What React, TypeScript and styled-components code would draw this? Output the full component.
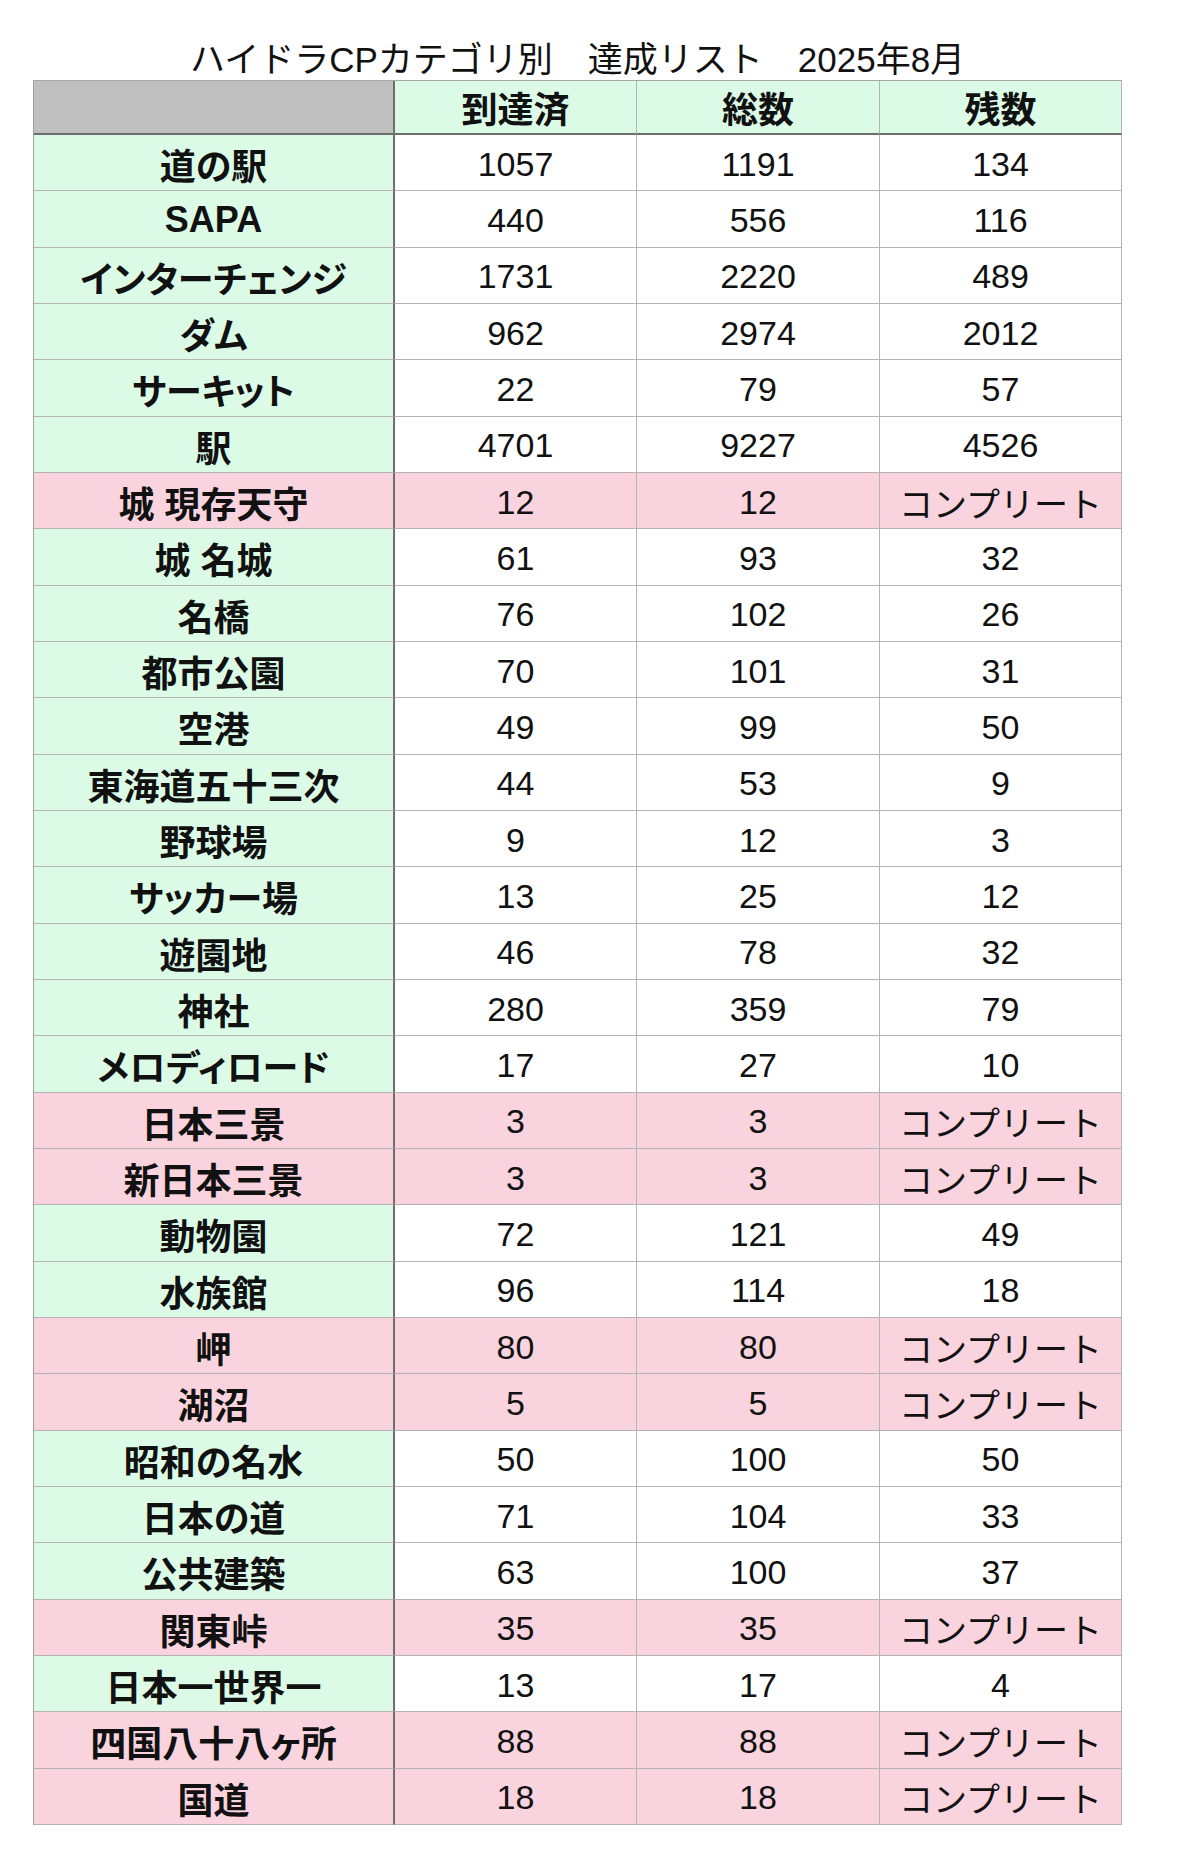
import styled, { createGlobalStyle } from 'styled-components'

type Kind = 'open' | 'done'

interface Category {
  name: string
  reached: number
  total: number
}

const categories: Category[] = [
  { name: '道の駅', reached: 1057, total: 1191 },
  { name: 'SAPA', reached: 440, total: 556 },
  { name: 'インターチェンジ', reached: 1731, total: 2220 },
  { name: 'ダム', reached: 962, total: 2974 },
  { name: 'サーキット', reached: 22, total: 79 },
  { name: '駅', reached: 4701, total: 9227 },
  { name: '城 現存天守', reached: 12, total: 12 },
  { name: '城 名城', reached: 61, total: 93 },
  { name: '名橋', reached: 76, total: 102 },
  { name: '都市公園', reached: 70, total: 101 },
  { name: '空港', reached: 49, total: 99 },
  { name: '東海道五十三次', reached: 44, total: 53 },
  { name: '野球場', reached: 9, total: 12 },
  { name: 'サッカー場', reached: 13, total: 25 },
  { name: '遊園地', reached: 46, total: 78 },
  { name: '神社', reached: 280, total: 359 },
  { name: 'メロディロード', reached: 17, total: 27 },
  { name: '日本三景', reached: 3, total: 3 },
  { name: '新日本三景', reached: 3, total: 3 },
  { name: '動物園', reached: 72, total: 121 },
  { name: '水族館', reached: 96, total: 114 },
  { name: '岬', reached: 80, total: 80 },
  { name: '湖沼', reached: 5, total: 5 },
  { name: '昭和の名水', reached: 50, total: 100 },
  { name: '日本の道', reached: 71, total: 104 },
  { name: '公共建築', reached: 63, total: 100 },
  { name: '関東峠', reached: 35, total: 35 },
  { name: '日本一世界一', reached: 13, total: 17 },
  { name: '四国八十八ヶ所', reached: 88, total: 88 },
  { name: '国道', reached: 18, total: 18 },
]

const GlobalStyle = createGlobalStyle`
  html, body {
    margin: 0;
    padding: 0;
    background: #ffffff;
  }
  body {
    font-family: "Liberation Sans", "Noto Sans CJK JP", sans-serif;
    color: #111111;
  }
`

const Page = styled.div`
  width: 1200px;
  height: 1870px;
  padding: 39px 0 0 33px;
  box-sizing: border-box;
`

const Title = styled.h1`
  width: 1089px;
  margin: 0;
  height: 41px;
  line-height: 41px;
  text-align: center;
  font-size: 35px;
  font-weight: 400;
  white-space: pre;
`

const Sheet = styled.div`
  width: 1089px;
  border-top: 1px solid #a8a8a8;
  border-left: 1px solid #a0a0a0;
  box-sizing: border-box;
`

const Row = styled.div<{ $head?: boolean }>`
  display: grid;
  grid-template-columns: 361px 242px 243px 242px;
  height: ${({ $head }) => ($head ? '54px' : '56.33px')};
  box-sizing: border-box;
`

const cellBg = (kind: Kind, first: boolean) => {
  if (kind === 'done') return '#f9d4de'
  return first ? '#dbfbe7' : '#ffffff'
}

const Cell = styled.div<{ $bg: string; $first?: boolean; $head?: boolean; $bold?: boolean }>`
  display: flex;
  align-items: center;
  justify-content: center;
  box-sizing: border-box;
  background: ${({ $bg }) => $bg};
  border-right: ${({ $first }) => ($first ? '2px solid #6e6e6e' : '1px solid #b4b4b4')};
  border-bottom: ${({ $head }) => ($head ? '2px solid #6e6e6e' : '1px solid #b4b4b4')};
  font-size: ${({ $bold }) => ($bold ? '36px' : '34px')};
  font-weight: ${({ $bold }) => ($bold ? 700 : 400)};
  font-feature-settings: ${({ $bold }) => ($bold ? '"palt"' : 'normal')};
  padding-top: ${({ $head }) => ($head ? '0' : '3px')};
  white-space: nowrap;
`

export default function App() {
  return (
    <>
      <GlobalStyle />
      <Page>
        <Title>{'ハイドラCPカテゴリ別　達成リスト　2025年8月'}</Title>
        <Sheet>
          <Row $head>
            <Cell $bg="#c0c0c0" $first $head />
            <Cell $bg="#dbfbe7" $head $bold>到達済</Cell>
            <Cell $bg="#dbfbe7" $head $bold>総数</Cell>
            <Cell $bg="#dbfbe7" $head $bold>残数</Cell>
          </Row>
          {categories.map((c) => {
            const left = c.total - c.reached
            const kind: Kind = left === 0 ? 'done' : 'open'
            return (
              <Row key={c.name}>
                <Cell $bg={cellBg(kind, true)} $first $bold>{c.name}</Cell>
                <Cell $bg={cellBg(kind, false)}>{c.reached}</Cell>
                <Cell $bg={cellBg(kind, false)}>{c.total}</Cell>
                <Cell $bg={cellBg(kind, false)}>{left === 0 ? 'コンプリート' : left}</Cell>
              </Row>
            )
          })}
        </Sheet>
      </Page>
    </>
  )
}
